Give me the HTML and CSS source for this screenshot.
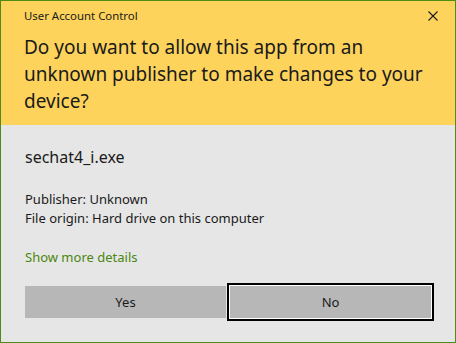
FILE: index.html
```html
<!DOCTYPE html>
<html lang="en">

<head>
    <meta charset="UTF-8">
    <meta name="viewport" content="width=device-width, initial-scale=1.0">
    <title>User Account Control</title>
    <link rel="stylesheet" href="styles.css">
</head>

<body>
    <div class="window">
        <!-- Yellow prompt header -->
        <div class="header">
            <div class="title-row">
                <span class="title">User Account Control</span>
                <svg class="close" width="10" height="10" viewBox="0 0 10 10">
                    <path d="M0.5 0.5 L9.5 9.5 M9.5 0.5 L0.5 9.5" stroke="#1a1a1a" stroke-width="1.1" fill="none"/>
                </svg>
            </div>
            <h1 class="question">Do you want to allow this app from an unknown publisher to make changes to your device?</h1>
        </div>

        <!-- Details -->
        <div class="content">
            <div class="app-name">sechat4_i.exe</div>
            <div class="info">
                <p>Publisher: Unknown</p>
                <p>File origin: Hard drive on this computer</p>
            </div>
            <a class="more" href="#">Show more details</a>
            <div class="buttons">
                <button class="btn">Yes</button>
                <button class="btn focused">No</button>
            </div>
        </div>
    </div>
</body>

</html>
```

FILE: styles.css
```css
/* Global */
body {
    margin: 0;
    font-family: 'Noto Sans', sans-serif;
    color: #000;
}

.window {
    width: 456px;
    height: 343px;
    box-sizing: border-box;
    border: 1px solid #4f8b17;
    background: #e6e6e6;
}

/* Header */
.header {
    background: #fdd35c;
    height: 124px;
    box-sizing: border-box;
    padding: 7px 0 0 23px;
}

.title-row {
    display: flex;
    align-items: center;
    justify-content: space-between;
    padding-right: 17px;
}

.title {
    font-size: 11.4px;
    line-height: 16px;
    color: #1a1a1a;
}

.close {
    display: block;
}

.question {
    margin: 10px 0 0;
    font-size: 19px;
    line-height: 27px;
    font-weight: 400;
    color: #1a1a1a;
    width: 420px;
}

/* Content */
.content {
    padding: 22px 24px 0 24px;
}

.app-name {
    font-size: 16px;
    line-height: 20px;
    color: #1a1a1a;
}

.info {
    margin-top: 23px;
}

.info p {
    margin: 0;
    font-size: 13px;
    line-height: 19px;
    color: #1a1a1a;
}

.more {
    display: block;
    margin-top: 20px;
    font-size: 13px;
    line-height: 19px;
    color: #4a8710;
    text-decoration: none;
}

/* Buttons */
.buttons {
    display: flex;
    gap: 4px;
    margin-top: 19px;
}

.btn {
    width: 201px;
    height: 32px;
    border: none;
    background: #b7b7b7;
    font-family: inherit;
    font-size: 13px;
    line-height: 16px;
    color: #1a1a1a;
    padding: 0;
}

.btn.focused {
    box-shadow: 0 0 0 1px #fff, 0 0 0 3px #000;
}
```
